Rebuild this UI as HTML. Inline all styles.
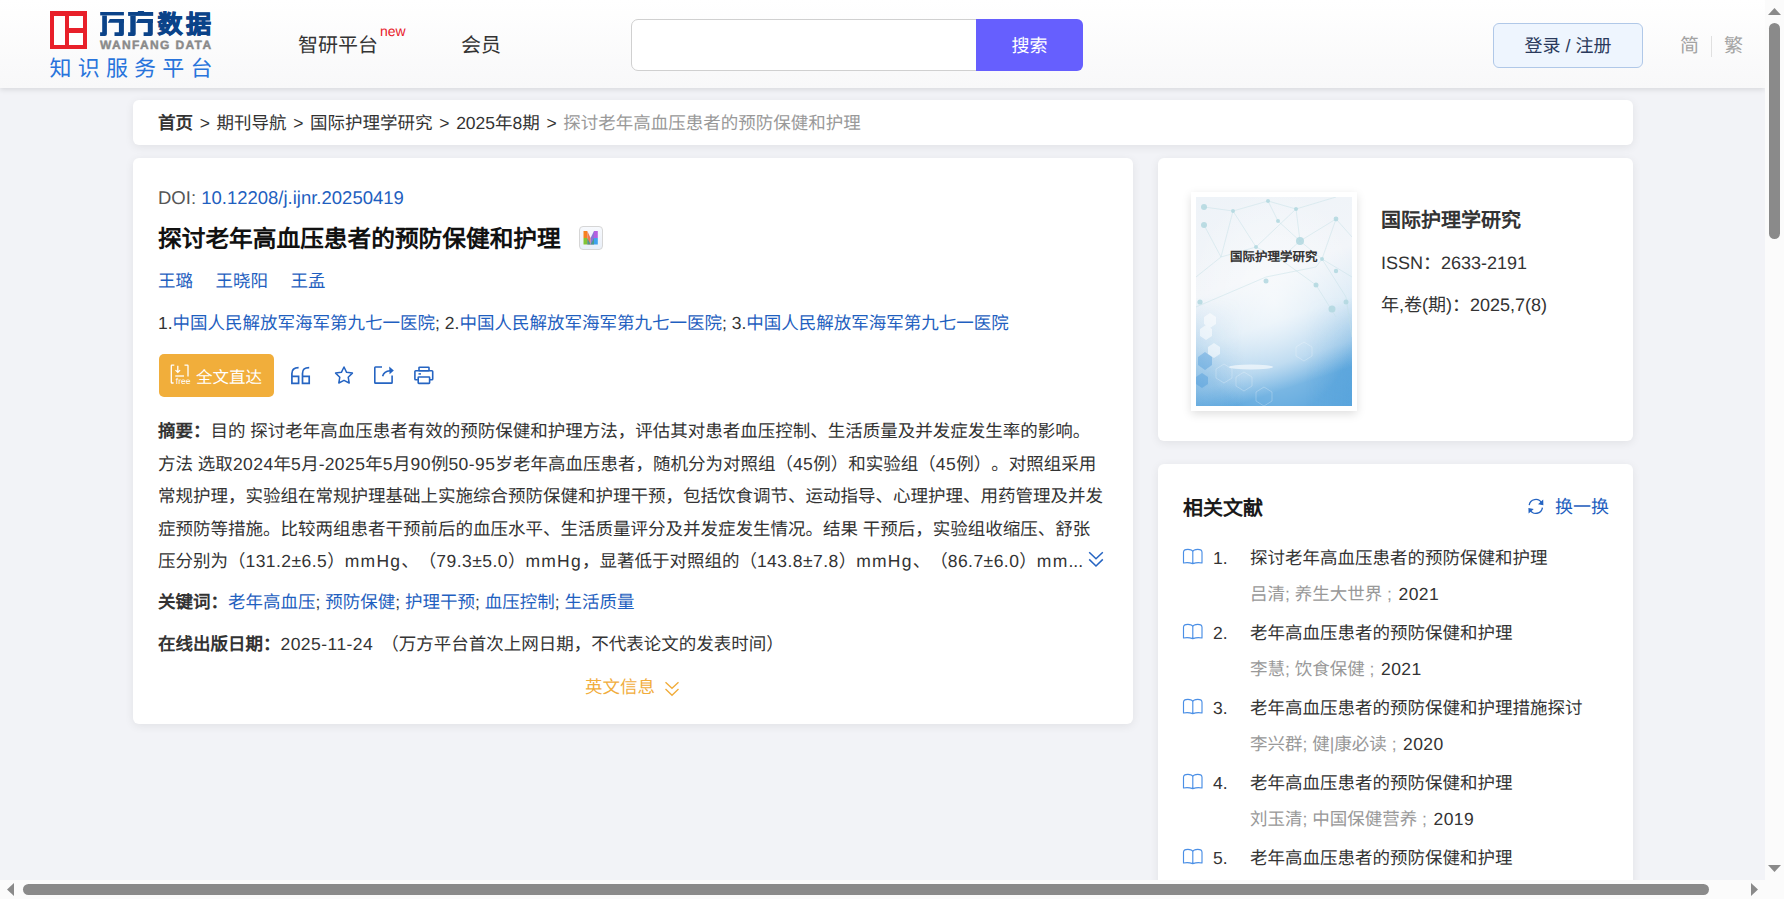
<!DOCTYPE html>
<html lang="zh-CN"><head><meta charset="utf-8">
<style>
*{box-sizing:border-box;margin:0;padding:0}
html,body{width:1784px;height:899px;overflow:hidden}
body{font-family:"Liberation Sans",sans-serif;text-rendering:geometricPrecision;text-spacing-trim:space-all;background:#f2f3f7;color:#333;position:relative}
.abs{position:absolute}
.nw{white-space:nowrap}
#header{position:absolute;left:0;top:0;width:1765px;height:88px;background:linear-gradient(#fff,#f8f8f9);box-shadow:0 2px 5px rgba(0,0,0,.10)}
.card{position:absolute;background:#fff;border-radius:6px;box-shadow:0 2px 10px rgba(0,0,0,.075)}
.blue{color:#1f5fc0}
i.D{font-style:normal;letter-spacing:.45px}
i.L{font-style:normal;letter-spacing:1.25px}
/* scrollbars */
#vsb{position:absolute;left:1765px;top:0;width:19px;height:880px;background:#fbfbfb}
#hsb{position:absolute;left:0;top:880px;width:1765px;height:19px;background:#fbfbfb}
#corner{position:absolute;left:1765px;top:880px;width:19px;height:19px;background:#fbfbfb}
</style></head>
<body>
<div id="header">
  <!-- logo -->
  <div class="abs" style="left:50px;top:11px;width:37px;height:38px;background:#e8202a"></div>
  <div class="abs" style="left:54px;top:15.5px;width:10.5px;height:29px;background:#fff"></div>
  <div class="abs" style="left:69px;top:15.5px;width:14px;height:12.5px;background:#fff"></div>
  <div class="abs" style="left:69px;top:32.5px;width:14px;height:12px;background:#fff"></div>
  <svg class="abs" style="left:98px;top:9px" width="60" height="30" viewBox="98 9 60 30" fill="#0b4389">
    <rect x="100.2" y="12" width="23.7" height="3.4"/>
    <path d="M102.2 15.4 H106.9 V34 Q106.9 35.9 105 35.9 H100.1 V32.2 H102.2 Z"/>
    <path d="M109.8 19.1 H123.9 V22.8 H107.8 Z"/>
    <path d="M118.9 19.1 H123.9 V34 Q123.9 35.9 122 35.9 H114.5 V32.2 H118.9 Z"/>
    <path d="M138.2 11 H143.7 L144.3 12 H137.6 Z"/>
    <rect x="128.1" y="12" width="25.1" height="3.9"/>
    <path d="M130.3 15.9 H135.7 V34 Q135.7 35.9 133.8 35.9 H128.1 V32.2 H130.3 Z"/>
    <path d="M138 19.1 H152.8 V23 H136 Z"/>
    <path d="M147.8 19.1 H152.8 V34 Q152.8 35.9 150.9 35.9 H143.6 V32.2 H147.8 Z"/>
  </svg>
  <div class="abs nw" style="left:157.5px;top:8px;font-size:25px;line-height:34px;font-weight:900;color:#0b4389;letter-spacing:3.6px;-webkit-text-stroke:0.9px #0b4389">数据</div>
  <div class="abs nw" style="left:100px;top:37.5px;font-size:12px;line-height:14px;font-weight:bold;color:#8a8a8a;letter-spacing:1.35px;-webkit-text-stroke:0.45px #8a8a8a">WANFANG DATA</div>
  <div class="abs nw" style="left:49.5px;top:55px;font-size:22px;line-height:28px;color:#2874dc;letter-spacing:6.2px">知识服务平台</div>
  <div class="abs nw" style="left:298px;top:32px;font-size:20px;line-height:28px;color:#333">智研平台</div>
  <div class="abs nw" style="left:380px;top:22.5px;font-size:14px;line-height:16px;color:#e8202a">new</div>
  <div class="abs nw" style="left:461px;top:32px;font-size:20px;line-height:28px;color:#333">会员</div>
  <!-- search -->
  <div class="abs" style="left:631px;top:19px;width:350px;height:52px;border:1px solid #d0d0d0;border-radius:7px 0 0 7px;background:#fff"></div>
  <div class="abs nw" style="left:976px;top:19px;width:107px;height:52px;border-radius:0 6px 6px 0;background:#665ffe;color:#fff;font-size:18px;line-height:54px;text-align:center">搜索</div>
  <!-- login -->
  <div class="abs nw" style="left:1493px;top:23px;width:150px;height:45px;border:1px solid #b0c8e8;border-radius:6px;background:#eef5fe;color:#2b3a5c;font-size:18px;line-height:44px;text-align:center">登录 / 注册</div>
  <div class="abs nw" style="left:1680px;top:33.5px;font-size:19px;line-height:26px;color:#a3a3a3">简</div>
  <div class="abs" style="left:1711px;top:36px;width:1px;height:21px;background:#e0e0e0"></div>
  <div class="abs nw" style="left:1724px;top:33.5px;font-size:19px;line-height:26px;color:#a3a3a3">繁</div>
</div>

<!-- breadcrumb -->
<div class="card" style="left:133px;top:100px;width:1500px;height:45px">
  <div class="abs nw" style="left:25px;top:10px;font-size:17.5px;line-height:26px;color:#333;word-spacing:1.8px"><b>首页</b> &gt; 期刊导航 &gt; 国际护理学研究 &gt; 2025年8期 &gt; <span style="color:#999">探讨老年高血压患者的预防保健和护理</span></div>
</div>

<!-- main card -->
<div class="card" style="left:133px;top:158px;width:1000px;height:566px">
  <div class="abs nw" style="left:25px;top:27px;font-size:18.5px;line-height:26px;color:#555">DOI: <span class="blue">10.12208/j.ijnr.20250419</span></div>
  <div class="abs nw" style="left:25px;top:65.5px;font-size:23.7px;line-height:32px;font-weight:bold;color:#111">探讨老年高血压患者的预防保健和护理</div>
  <div class="abs" style="left:446px;top:68px;width:24px;height:24px;border:1.5px solid #d6d6d6;border-radius:4px;background:linear-gradient(#f7f9fd,#e9eff8)"></div>
  <svg class="abs" style="left:450px;top:73px" width="16" height="14" viewBox="0 0 16 14">
    <rect x="0.5" y="0" width="3.8" height="7" fill="#f7811f"/>
    <rect x="0.5" y="7" width="3.8" height="6.5" fill="#82c534"/>
    <rect x="11" y="0" width="3.8" height="7" fill="#b45fe0"/>
    <rect x="11" y="7" width="3.8" height="6.5" fill="#3ea2ee"/>
    <path d="M4.3 0 L7.6 7 L7.6 13.5 L4.3 13.5 Z" fill="#f07a52"/>
    <path d="M11 0 L7.6 7 L7.6 13.5 L11 13.5 Z" fill="#8a74d6"/>
    <path d="M4.3 7 L7.6 13.5 L11 7 L11 13.5 L4.3 13.5 Z" fill="#4a9c8c"/>
  </svg>
  <div class="abs nw blue" style="left:25px;top:110px;font-size:17.5px;line-height:26px">王璐<span style="display:inline-block;width:22.5px"></span>王晓阳<span style="display:inline-block;width:22.5px"></span>王孟</div>
  <div class="abs nw blue" style="left:25px;top:151.5px;font-size:17.5px;line-height:26px"><span style="color:#333">1.</span>中国人民解放军海军第九七一医院<span style="color:#333">; 2.</span>中国人民解放军海军第九七一医院<span style="color:#333">; 3.</span>中国人民解放军海军第九七一医院</div>
  <div class="abs" style="left:26px;top:196px;width:115px;height:43px;border-radius:5px;background:#f1ae3b"></div>
  <svg class="abs" style="left:37px;top:206px" width="22" height="22" viewBox="0 0 22 22" fill="none" stroke="#fff" stroke-width="1.3">
    <path d="M4.3 1.2 H1.9 Q1.3 1.2 1.3 1.8 V18.4 Q1.3 19 1.9 19 H3.6"/>
    <path d="M14.5 1.2 H17.4 Q18 1.2 18 1.8 V12.6"/>
    <path d="M7.8 1.8 V8.4 M5.5 6.1 L7.8 8.4 L10.1 6.1"/>
    <path d="M5.3 12 H14"/>
    <text x="5.8" y="20" font-family="Liberation Sans" font-size="8.5" fill="#fff" stroke="none">free</text>
  </svg>
  <div class="abs nw" style="left:63px;top:207.5px;font-size:16.5px;line-height:24px;color:#fff">全文直达</div>
  <svg class="abs" style="left:157px;top:208px" width="145" height="20" viewBox="0 0 145 20" fill="none" stroke="#2564c2" stroke-width="1.7">
    <path d="M8.6 1.6 C4.2 1.6 1.9 3.2 1.9 7.4 V17.3 H8.6 V10.3 H1.9"/>
    <path d="M19.2 1.6 C14.8 1.6 12.5 3.2 12.5 7.4 V17.3 H19.2 V10.3 H12.5"/>
    <path stroke-width="1.5" stroke-linejoin="round" d="M54 1 L56.6 6.3 L62.4 7.1 L58.2 11.2 L59.2 17 L54 14.3 L48.8 17 L49.8 11.2 L45.6 7.1 L51.4 6.3 Z"/>
    <path stroke-width="1.6" d="M92 1 H85.5 Q84.8 1 84.8 1.7 V16.4 Q84.8 17.1 85.5 17.1 H101.4 Q102.1 17.1 102.1 16.4 V9.5"/>
    <path stroke-width="1.6" d="M92.6 10.2 Q94 5.4 100 4.8"/>
    <path stroke="none" fill="#2564c2" d="M99.2 0.6 L103.8 4.4 L99.6 8.2 Z"/>
    <rect stroke-width="1.6" x="129" y="1.2" width="10" height="3.6" rx="0.6"/>
    <path stroke-width="1.6" d="M127.8 13.8 H125.7 Q124.9 13.8 124.9 13 V5.6 Q124.9 4.8 125.7 4.8 H141.9 Q142.7 4.8 142.7 5.6 V13 Q142.7 13.8 141.9 13.8 H140"/>
    <rect stroke-width="1.6" x="128.2" y="11" width="11.4" height="6.4" rx="0.6"/>
    <path stroke-width="1.5" d="M128.5 7.9 H131"/>
  </svg>
  <div class="abs nw" style="left:25px;top:257px;font-size:17.5px;line-height:32.5px;color:#333">
    <div><b>摘要：</b>目的 探讨老年高血压患者有效的预防保健和护理方法，评估其对患者血压控制、生活质量及并发症发生率的影响。</div>
    <div>方法 选取<i class="D">2024</i>年<i class="D">5</i>月-<i class="D">2025</i>年<i class="D">5</i>月<i class="D">90</i>例<i class="D">50-95</i>岁老年高血压患者，随机分为对照组（<i class="D">45</i>例）和实验组（<i class="D">45</i>例）。对照组采用</div>
    <div>常规护理，实验组在常规护理基础上实施综合预防保健和护理干预，包括饮食调节、运动指导、心理护理、用药管理及并发</div>
    <div>症预防等措施。比较两组患者干预前后的血压水平、生活质量评分及并发症发生情况。结果 干预后，实验组收缩压、舒张</div>
    <div>压分别为（<i class="D">131.2±6.5</i>）<i class="L">mmHg</i>、（<i class="D">79.3±5.0</i>）<i class="L">mmHg</i>，显著低于对照组的（<i class="D">143.8±7.8</i>）<i class="L">mmHg</i>、（<i class="D">86.7±6.0</i>）<i class="L">mm</i>...</div>
  </div>
  <div class="abs nw" style="left:25px;top:431px;font-size:17.5px;line-height:26px;color:#333"><b>关键词：</b><span class="blue">老年高血压</span>; <span class="blue">预防保健</span>; <span class="blue">护理干预</span>; <span class="blue">血压控制</span>; <span class="blue">生活质量</span></div>
  <div class="abs nw" style="left:25px;top:473px;font-size:17.5px;line-height:26px;color:#333"><b>在线出版日期：</b><i class="D">2025-11-24</i><span style="display:inline-block;width:8px"></span>（万方平台首次上网日期，不代表论文的发表时间）</div>
  <svg class="abs" style="left:955px;top:393px" width="16" height="17" viewBox="0 0 16 17" fill="none" stroke="#2564c2" stroke-width="1.5"><path d="M1.2 1.2 L8 7.8 L14.8 1.2 M1.2 8.4 L8 15 L14.8 8.4"/></svg>
  <div class="abs nw" style="left:452px;top:516px;font-size:17.5px;line-height:26px;color:#f1ad3c">英文信息</div>
  <svg class="abs" style="left:531px;top:523px" width="16" height="17" viewBox="0 0 16 17" fill="none" stroke="#f1ad3c" stroke-width="1.4"><path d="M1.5 1.3 L8 7.3 L14.5 1.3 M1.5 8.1 L8 14.3 L14.5 8.1"/></svg>
</div>

<!-- right card 1 -->
<div class="card" style="left:1158px;top:158px;width:475px;height:283px">
  <div class="abs" style="left:33px;top:33.5px;width:166px;height:219px;background:#fff;box-shadow:0 3px 9px rgba(0,0,0,.13)"></div>
  <svg class="abs" style="left:38px;top:39px" width="156" height="209" viewBox="0 0 156 209">
    <defs>
      <linearGradient id="cg" x1="0" y1="0" x2="0.25" y2="1">
        <stop offset="0" stop-color="#eef3f8"/>
        <stop offset="0.45" stop-color="#f2f5f9"/>
        <stop offset="0.68" stop-color="#dcebf6"/>
        <stop offset="0.88" stop-color="#a8cfec"/>
        <stop offset="1" stop-color="#64abdf"/>
      </linearGradient>
      <radialGradient id="rg" cx="0.5" cy="0.5" r="0.55">
        <stop offset="0" stop-color="#ffffff" stop-opacity="0.6"/>
        <stop offset="1" stop-color="#ffffff" stop-opacity="0"/>
      </radialGradient>
      <linearGradient id="mg" x1="0" y1="0" x2="0" y2="1"><stop offset="0" stop-color="#fff" stop-opacity="0"/><stop offset="1" stop-color="#fff" stop-opacity="1"/></linearGradient>
      <mask id="mk"><rect y="100" width="156" height="109" fill="url(#mg)"/></mask>
      <linearGradient id="bg2" x1="0" y1="0" x2="1" y2="0">
        <stop offset="0" stop-color="#3f95d6" stop-opacity="0.4"/>
        <stop offset="0.3" stop-color="#3f95d6" stop-opacity="0"/>
        <stop offset="0.7" stop-color="#3f95d6" stop-opacity="0"/>
        <stop offset="1" stop-color="#3f95d6" stop-opacity="0.3"/>
      </linearGradient>
    </defs>
    <rect width="156" height="209" fill="url(#cg)"/>
    <rect y="100" width="156" height="109" fill="url(#bg2)" mask="url(#mk)"/>
    <rect width="156" height="209" fill="url(#rg)"/>
    <g stroke="#c3e0e6" stroke-width="0.6" fill="none" opacity="0.8">
      <path d="M8 10 L37 14 L72 4 L100 12 L140 0 M37 14 L25 60 L8 28 M37 14 L60 50 L100 12 L104 44 L140 22 L156 40 M72 4 L82 24 L104 44 L126 62 L156 80 M0 80 L25 60 L60 50 L84 62 L104 44 M0 110 L70 80 L120 70 M120 70 L126 62 M140 22 L126 62 L150 100 L156 140 M84 62 L120 88 L140 120"/>
    </g>
    <g fill="#b2d8e0" opacity="0.85">
      <circle cx="8" cy="10" r="3"/><circle cx="37" cy="14" r="2"/><circle cx="72" cy="4" r="2"/><circle cx="100" cy="12" r="2"/><circle cx="140" cy="22" r="2.4"/>
      <circle cx="8" cy="28" r="3"/><circle cx="60" cy="50" r="2"/><circle cx="104" cy="44" r="4"/><circle cx="82" cy="24" r="2"/><circle cx="84" cy="62" r="2"/>
      <circle cx="126" cy="62" r="2"/><circle cx="70" cy="84" r="2.5"/><circle cx="120" cy="88" r="2.5"/><circle cx="4" cy="105" r="2.6"/><circle cx="150" cy="105" r="2.5"/><circle cx="136" cy="112" r="3.5"/><circle cx="140" cy="74" r="2.2"/>
    </g>
    <g fill="#ffffff" opacity="0.55">
      <path d="M8 120 l6 -4 l6 4 v7 l-6 4 l-6 -4 Z M4 132 l6 -4 l6 4 v7 l-6 4 l-6 -4 Z M12 150 l6 -4 l6 4 v7 l-6 4 l-6 -4 Z"/>
    </g>
    <g fill="#3a8fd6" opacity="0.35">
      <path d="M2 160 l7 -5 l7 5 v8 l-7 5 l-7 -5 Z M0 180 l6 -4 l6 4 v7 l-6 4 l-6 -4 Z"/>
    </g>
    <g fill="none" stroke="#ffffff" stroke-width="0.7" opacity="0.35">
      <path d="M20 172 l8 -5 l8 5 v9 l-8 5 l-8 -5 Z M40 180 l8 -5 l8 5 v9 l-8 5 l-8 -5 Z M100 150 l8 -5 l8 5 v9 l-8 5 l-8 -5 Z M60 195 l8 -5 l8 5 v9 l-8 5 l-8 -5 Z"/>
    </g>
    <ellipse cx="55" cy="170" rx="22" ry="2.5" fill="#ffffff" opacity="0.6"/>
  </svg>
  <div class="abs nw" style="left:72px;top:90px;font-size:12.5px;line-height:18px;font-weight:bold;color:#333">国际护理学研究</div>
  <div class="abs nw" style="left:223px;top:49px;font-size:20px;line-height:28px;font-weight:bold;color:#333">国际护理学研究</div>
  <div class="abs nw" style="left:223px;top:92px;font-size:18px;line-height:26px;color:#333">ISSN：2633-2191</div>
  <div class="abs nw" style="left:223px;top:134px;font-size:18px;line-height:26px;color:#333">年,卷(期)：2025,7(8)</div>
</div>

<!-- right card 2 -->
<div class="card" style="left:1158px;top:464px;width:475px;height:500px">
  <div class="abs nw" style="left:25px;top:31px;font-size:20px;line-height:28px;font-weight:bold;color:#1a1a1a">相关文献</div>
  <svg class="abs" style="left:369px;top:34px" width="18" height="17" viewBox="0 0 18 17" fill="none" stroke="#2564c2" stroke-width="1.3"><path d="M2.2 7.2 A6.6 6.6 0 0 1 14.6 5"/><path d="M15.4 9.6 A6.6 6.6 0 0 1 3.1 12"/><path stroke="none" fill="#2564c2" d="M16.2 1.6 L16.4 7.2 L11 6.2 Z M1.6 15.6 L1.4 10 L6.8 11 Z"/></svg>
  <div class="abs nw blue" style="left:397px;top:29px;font-size:18px;line-height:28px">换一换</div>
  <div class="abs nw" style="left:55px;top:81px;font-size:17.5px;line-height:26px;color:#333">1.</div>
  <svg class="abs" style="left:24px;top:84px" width="22" height="18" viewBox="0 0 22 18" fill="none" stroke="#4a8fe6" stroke-width="1.15" stroke-linejoin="round"><path d="M1.5 15 V4.2 Q1.5 1.3 5.9 1.3 Q10 1.3 10.8 3.6 Q11.6 1.3 15.7 1.3 Q20 1.3 20 4.2 V15 Q15.6 13.9 10.8 15.6 Q6 13.9 1.5 15 Z M10.8 3.6 V15.6"/></svg>
  <div class="abs nw" style="left:92px;top:81px;font-size:17.5px;line-height:26px;color:#333">探讨老年高血压患者的预防保健和护理</div>
  <div class="abs nw" style="left:92px;top:117px;font-size:17.5px;line-height:26px;color:#999">吕清; 养生大世界 ;<span style="display:inline-block;width:6.5px"></span><span style="color:#333"><i class="D">2021</i></span></div>
  <div class="abs nw" style="left:55px;top:156px;font-size:17.5px;line-height:26px;color:#333">2.</div>
  <svg class="abs" style="left:24px;top:159px" width="22" height="18" viewBox="0 0 22 18" fill="none" stroke="#4a8fe6" stroke-width="1.15" stroke-linejoin="round"><path d="M1.5 15 V4.2 Q1.5 1.3 5.9 1.3 Q10 1.3 10.8 3.6 Q11.6 1.3 15.7 1.3 Q20 1.3 20 4.2 V15 Q15.6 13.9 10.8 15.6 Q6 13.9 1.5 15 Z M10.8 3.6 V15.6"/></svg>
  <div class="abs nw" style="left:92px;top:156px;font-size:17.5px;line-height:26px;color:#333">老年高血压患者的预防保健和护理</div>
  <div class="abs nw" style="left:92px;top:192px;font-size:17.5px;line-height:26px;color:#999">李慧; 饮食保健 ;<span style="display:inline-block;width:6.5px"></span><span style="color:#333"><i class="D">2021</i></span></div>
  <div class="abs nw" style="left:55px;top:231px;font-size:17.5px;line-height:26px;color:#333">3.</div>
  <svg class="abs" style="left:24px;top:234px" width="22" height="18" viewBox="0 0 22 18" fill="none" stroke="#4a8fe6" stroke-width="1.15" stroke-linejoin="round"><path d="M1.5 15 V4.2 Q1.5 1.3 5.9 1.3 Q10 1.3 10.8 3.6 Q11.6 1.3 15.7 1.3 Q20 1.3 20 4.2 V15 Q15.6 13.9 10.8 15.6 Q6 13.9 1.5 15 Z M10.8 3.6 V15.6"/></svg>
  <div class="abs nw" style="left:92px;top:231px;font-size:17.5px;line-height:26px;color:#333">老年高血压患者的预防保健和护理措施探讨</div>
  <div class="abs nw" style="left:92px;top:267px;font-size:17.5px;line-height:26px;color:#999">李兴群; 健|康必读 ;<span style="display:inline-block;width:6.5px"></span><span style="color:#333"><i class="D">2020</i></span></div>
  <div class="abs nw" style="left:55px;top:306px;font-size:17.5px;line-height:26px;color:#333">4.</div>
  <svg class="abs" style="left:24px;top:309px" width="22" height="18" viewBox="0 0 22 18" fill="none" stroke="#4a8fe6" stroke-width="1.15" stroke-linejoin="round"><path d="M1.5 15 V4.2 Q1.5 1.3 5.9 1.3 Q10 1.3 10.8 3.6 Q11.6 1.3 15.7 1.3 Q20 1.3 20 4.2 V15 Q15.6 13.9 10.8 15.6 Q6 13.9 1.5 15 Z M10.8 3.6 V15.6"/></svg>
  <div class="abs nw" style="left:92px;top:306px;font-size:17.5px;line-height:26px;color:#333">老年高血压患者的预防保健和护理</div>
  <div class="abs nw" style="left:92px;top:342px;font-size:17.5px;line-height:26px;color:#999">刘玉清; 中国保健营养 ;<span style="display:inline-block;width:6.5px"></span><span style="color:#333"><i class="D">2019</i></span></div>
  <div class="abs nw" style="left:55px;top:381px;font-size:17.5px;line-height:26px;color:#333">5.</div>
  <svg class="abs" style="left:24px;top:384px" width="22" height="18" viewBox="0 0 22 18" fill="none" stroke="#4a8fe6" stroke-width="1.15" stroke-linejoin="round"><path d="M1.5 15 V4.2 Q1.5 1.3 5.9 1.3 Q10 1.3 10.8 3.6 Q11.6 1.3 15.7 1.3 Q20 1.3 20 4.2 V15 Q15.6 13.9 10.8 15.6 Q6 13.9 1.5 15 Z M10.8 3.6 V15.6"/></svg>
  <div class="abs nw" style="left:92px;top:381px;font-size:17.5px;line-height:26px;color:#333">老年高血压患者的预防保健和护理</div>
</div>

<div id="vsb">
  <svg class="abs" style="left:0;top:0" width="19" height="880"><path d="M3 15 L9.5 8 L16 15 Z" fill="#8a8a8a"/><rect x="4" y="23" width="11" height="216" rx="5.5" fill="#8a8a8a"/><path d="M3 865 L16 865 L9.5 872 Z" fill="#8a8a8a"/></svg>
</div>
<div id="hsb">
  <svg class="abs" style="left:0;top:0" width="1765" height="19"><path d="M14 3 L14 16 L7 9.5 Z" fill="#8a8a8a"/><rect x="23" y="4" width="1686" height="11" rx="5.5" fill="#8a8a8a"/><path d="M1751 3 L1751 16 L1758 9.5 Z" fill="#8a8a8a"/></svg>
</div>
<div id="corner"></div>
</body></html>
